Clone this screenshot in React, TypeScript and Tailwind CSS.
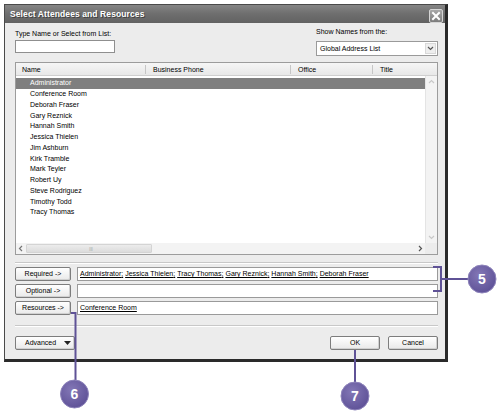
import React from "react";

const names = [
  "Administrator",
  "Conference Room",
  "Deborah Fraser",
  "Gary Reznick",
  "Hannah Smith",
  "Jessica Thielen",
  "Jim Ashburn",
  "Kirk Tramble",
  "Mark Teyler",
  "Robert Uy",
  "Steve Rodriguez",
  "Timothy Todd",
  "Tracy Thomas",
];

const required = [
  "Administrator",
  "Jessica Thielen",
  "Tracy Thomas",
  "Gary Reznick",
  "Hannah Smith",
  "Deborah Fraser",
];

const btnBase =
  "h-[14px] flex items-center border border-[#7d7d7d] rounded-[2px] bg-gradient-to-b from-white to-[#e9e9e9] shadow-[inset_-1px_-1px_0_#d0d0d0]";

function Btn({ children, className = "" }: { children: React.ReactNode; className?: string }) {
  return <div className={btnBase + " justify-center " + className}>{children}</div>;
}

function Circle({ cx, cy, n }: { cx: number; cy: number; n: string }) {
  return (
    <g>
      <circle cx={cx} cy={cy} r={14} fill="url(#cg)" stroke="#8e84bb" strokeWidth={1} />
      <text
        x={cx}
        y={cy + 5}
        textAnchor="middle"
        fontFamily="'Liberation Sans', Arial, sans-serif"
        fontWeight="bold"
        fontSize="14"
        fill="#ffffff"
      >
        {n}
      </text>
    </g>
  );
}

export default function App() {
  return (
    <div className="relative w-[500px] h-[415px] bg-white overflow-hidden font-['Liberation_Sans',Arial,sans-serif] text-[7px] leading-[8px] text-black">
      <div className="ml-[4px] mt-[4px] w-[444px] h-[358px] border border-[#4a4a4a] border-r-[3px] border-r-[#2a2a2a] border-b-[3px] border-b-[#2a2a2a] bg-[#ececec] flex flex-col">
        {/* title bar */}
        <div className="h-[18px] flex items-center justify-between pl-[5px] pr-[2px] bg-gradient-to-b from-[#858585] via-[#6e6e6e] to-[#626262]">
          <span className="text-white font-bold text-[8.5px] tracking-[0.1px] [text-shadow:1px_1px_0_#404040]">
            Select Attendees and Resources
          </span>
          <div className="w-[14px] h-[14px] mt-[3px] border border-[#d6d6d6] rounded-[2px] bg-gradient-to-b from-[#a8a8a8] to-[#7c7c7c] flex items-center justify-center">
            <svg width="10" height="10" viewBox="0 0 10 10">
              <path d="M2 2 L8 8 M8 2 L2 8" stroke="#fff" strokeWidth="2" strokeLinecap="square" />
            </svg>
          </div>
        </div>

        {/* body */}
        <div className="flex-1 flex flex-col pl-[10px] pr-[7px]">
          {/* top controls */}
          <div className="flex justify-between items-start h-[39px]">
            <div className="flex flex-col pt-[6px]">
              <span className="h-[9px] leading-[9px]">Type Name or Select from List:</span>
              <div className="mt-[2px] w-[100px] h-[13px] bg-white border border-[#8f8f8f]" />
            </div>
            <div className="flex flex-col pt-[4px] w-[122px]">
              <span className="h-[9px] leading-[9px]">Show Names from the:</span>
              <div className="mt-[5px] w-[122px] h-[15px] bg-white border border-[#9a9a9a] flex items-center justify-between pl-[3px] pr-[1px]">
                <span>Global Address List</span>
                <div className="w-[11px] h-[11px] bg-[#eeeeee] border border-[#d8d8d8] flex items-center justify-center">
                  <svg width="7" height="5" viewBox="0 0 7 5">
                    <path d="M1 1 L3.5 3.5 L6 1" stroke="#555" strokeWidth="1.2" fill="none" />
                  </svg>
                </div>
              </div>
            </div>
          </div>

          {/* list box */}
          <div className="h-[193px] border border-[#9c9c9c] bg-white flex flex-col">
            <div className="h-[13px] flex items-center bg-gradient-to-b from-[#f6f6f6] to-[#e8e8e8] border-b border-[#cfcfcf] shrink-0">
              <div className="w-[130px] pl-[6px] border-r border-[#c6c6c6] h-[9px] leading-[9px]">Name</div>
              <div className="w-[145px] pl-[7px] border-r border-[#c6c6c6] h-[9px] leading-[9px]">Business Phone</div>
              <div className="w-[82px] pl-[7px] border-r border-[#c6c6c6] h-[9px] leading-[9px]">Office</div>
              <div className="pl-[7px] h-[9px] leading-[9px]">Title</div>
            </div>
            <div className="flex-1 flex">
              <div className="flex-1 flex flex-col pt-[2px]">
                {names.map((n, i) => (
                  <div
                    key={n}
                    className={
                      "h-[10.75px] flex items-center pl-[14px] " +
                      (i === 0 ? "bg-[#7f7f7f] text-white" : "")
                    }
                  >
                    {n}
                  </div>
                ))}
              </div>
              {/* vertical scrollbar */}
              <div className="w-[12px] bg-[#f3f3f3] border-l border-[#e4e4e4] flex flex-col justify-between items-center py-[3px]">
                <svg width="7" height="5" viewBox="0 0 7 5">
                  <path d="M1 4 L3.5 1.5 L6 4" stroke="#c8c8c8" strokeWidth="1.2" fill="none" />
                </svg>
                <svg width="7" height="5" viewBox="0 0 7 5">
                  <path d="M1 1 L3.5 3.5 L6 1" stroke="#c8c8c8" strokeWidth="1.2" fill="none" />
                </svg>
              </div>
            </div>
            {/* horizontal scrollbar */}
            <div className="h-[11px] flex shrink-0">
              <div className="flex-1 bg-[#f3f3f3] flex items-center pl-[2px] pr-[2px]">
                <svg width="5" height="7" viewBox="0 0 5 7">
                  <path d="M4 1 L1.5 3.5 L4 6" stroke="#777" strokeWidth="1.2" fill="none" />
                </svg>
                <div className="ml-[3px] w-[126px] h-[9px] bg-gradient-to-b from-[#ececec] to-[#dcdcdc] border border-[#d4d4d4] rounded-[1px] flex items-center pl-[62px]">
                  <span className="text-[6px] leading-[6px] text-[#b5b5b5] tracking-[-0.5px]">III</span>
                </div>
                <div className="flex-1" />
                <svg width="5" height="7" viewBox="0 0 5 7">
                  <path d="M1 1 L3.5 3.5 L1 6" stroke="#555" strokeWidth="1.2" fill="none" />
                </svg>
              </div>
              <div className="w-[12px] bg-[#ececec]" />
            </div>
          </div>

          {/* separator */}
          <div className="mt-[7px] h-[2px] border-t border-[#c8c8c8] border-b border-b-white" />

          {/* attendee rows */}
          <div className="mt-[3px] flex flex-col gap-[3px]">
            <div className="flex items-center gap-[6px]">
              <Btn className="w-[56px]">Required -&gt;</Btn>
              <div className="flex-1 h-[14px] bg-white border border-[#9a9a9a] flex items-center pl-[2px] whitespace-nowrap">
                {required.map((r, i) => (
                  <React.Fragment key={r}>
                    <span className="underline">{r}</span>
                    {i < required.length - 1 ? <span className="underline">;</span> : null}
                    {i < required.length - 1 ? <span>&nbsp;</span> : null}
                  </React.Fragment>
                ))}
              </div>
            </div>
            <div className="flex items-center gap-[6px]">
              <Btn className="w-[56px]">Optional -&gt;</Btn>
              <div className="flex-1 h-[14px] bg-white border border-[#9a9a9a]" />
            </div>
            <div className="flex items-center gap-[6px]">
              <Btn className="w-[56px]">Resources -&gt;</Btn>
              <div className="flex-1 h-[14px] bg-white border border-[#9a9a9a] flex items-center pl-[2px]">
                <span className="underline">Conference Room</span>
              </div>
            </div>
          </div>

          {/* separator */}
          <div className="mt-[10px] h-[2px] border-t border-[#c8c8c8] border-b border-b-white" />

          {/* bottom buttons */}
          <div className="mt-[9px] flex items-center justify-between">
            <div className={btnBase + " w-[60px] justify-between pl-[9px] pr-[3px]"}>
              <span>Advanced</span>
              <svg width="7" height="4" viewBox="0 0 7 4">
                <path d="M0 0 H7 L3.5 4 Z" fill="#222" />
              </svg>
            </div>
            <div className="flex gap-[8px]">
              <Btn className="w-[50px]">OK</Btn>
              <Btn className="w-[50px]">Cancel</Btn>
            </div>
          </div>
        </div>
      </div>

      {/* callouts */}
      <svg className="absolute left-0 top-0 pointer-events-none" width="500" height="415" viewBox="0 0 500 415">
        <defs>
          <radialGradient id="cg" cx="40%" cy="35%" r="70%">
            <stop offset="0%" stopColor="#8377b6" />
            <stop offset="100%" stopColor="#5d5096" />
          </radialGradient>
        </defs>
        <g stroke="#5f5296" strokeWidth="2" fill="none">
          <path d="M433 267 H441 V291 H433" />
          <path d="M441 279 H469" />
          <path d="M71 313 H75.5 V380" />
          <path d="M355 350 V382" />
        </g>
        <Circle cx={482} cy={279} n="5" />
        <Circle cx={74.5} cy={394} n="6" />
        <Circle cx={355} cy={396} n="7" />
      </svg>
    </div>
  );
}
